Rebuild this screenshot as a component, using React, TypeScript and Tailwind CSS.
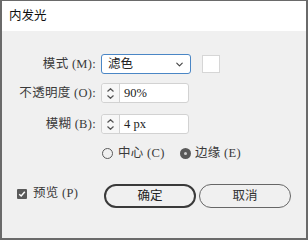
import { ChevronDown } from "lucide-react";

const font = "font-['Liberation_Serif','Noto_Sans_CJK_SC',serif]";

function Spinner({ value }: { value: string }) {
  return (
    <div className="flex h-[20px] w-[88px] rounded-[3px] border border-[#d2d2d2] bg-white">
      <div className="flex w-[18px] flex-col items-center justify-center gap-[3px] border-r border-[#d2d2d2] bg-[#f7f7f7] rounded-l-[3px]">
        <svg width="7" height="4" viewBox="0 0 7 4" fill="none" stroke="#555" strokeWidth="1.2">
          <path d="M0.5 3.5 L3.5 0.7 L6.5 3.5" />
        </svg>
        <svg width="7" height="4" viewBox="0 0 7 4" fill="none" stroke="#555" strokeWidth="1.2">
          <path d="M0.5 0.5 L3.5 3.3 L6.5 0.5" />
        </svg>
      </div>
      <div className="flex items-center pl-[4px] text-[12.5px] text-[#222] whitespace-pre">{value}</div>
    </div>
  );
}

function Label({ children }: { children: React.ReactNode }) {
  return (
    <div className="w-[99px] pr-[5px] text-right text-[12.5px] tracking-[0.3px] text-[#3a3a3a] whitespace-pre">{children}</div>
  );
}

export default function App() {
  return (
    <div className={`${font} flex h-[240px] w-[308px] flex-col border-x-2 border-b-2 border-t border-[#6a6a6a] bg-[#f0f0f0]`}>
      <div className="flex h-[30px] items-center bg-white px-[7px] text-[12.5px] text-[#111]">内发光</div>

      <div className="flex flex-col pt-[23px]">
        <div className="flex h-[20px] items-center">
          <Label>模式 (M):</Label>
          <div className="flex h-[20px] w-[90px] items-center justify-between rounded-[3px] border border-[#4a86c5] bg-white pl-[6px] pr-[5px] text-[12.5px] text-[#222]">
            <span>滤色</span>
            <ChevronDown size={11} strokeWidth={2.5} color="#444" />
          </div>
          <div className="ml-[11px] h-[18px] w-[18px] border border-[#d6d6d6] bg-white" />
        </div>

        <div className="mt-[9px] flex h-[20px] items-center">
          <Label>不透明度 (O):</Label>
          <Spinner value="90%" />
        </div>

        <div className="mt-[11px] flex h-[20px] items-center">
          <Label>模糊 (B):</Label>
          <Spinner value="4 px" />
        </div>

        <div className="mt-[12px] flex h-[14px] items-center pl-[100px] text-[12.5px] tracking-[0.3px] text-[#3a3a3a]">
          <div className="flex w-[78px] items-center">
            <div className="h-[11px] w-[11px] rounded-full border-[1.5px] border-[#5a5a5a]" />
            <span className="ml-[5px] whitespace-pre">中心 (C)</span>
          </div>
          <div className="flex h-[11px] w-[11px] items-center justify-center rounded-full bg-[#5a5a5a]">
            <div className="h-[3px] w-[3px] rounded-full bg-[#cfcfcf]" />
          </div>
          <span className="ml-[4px] whitespace-pre">边缘 (E)</span>
        </div>

        <div className="mt-[24px] flex items-center">
          <div className="flex w-[102px] items-center -mt-[5px]">
            <div className="ml-[15px] flex h-[10px] w-[10px] items-center justify-center rounded-[1px] bg-[#5a5a5a]">
              <svg width="8" height="8" viewBox="0 0 8 8" fill="none" stroke="white" strokeWidth="1.5">
                <path d="M1.2 4.2 L3.2 6 L6.8 1.8" />
              </svg>
            </div>
            <span className="ml-[6px] text-[12.5px] tracking-[0.3px] text-[#3a3a3a] whitespace-pre">预览 (P)</span>
          </div>
          <button className="flex h-[24px] w-[92px] items-center justify-center rounded-full border-2 border-[#3a3a3a] text-[12.5px] text-[#222]">
            确定
          </button>
          <button className="ml-[3px] flex h-[24px] w-[92px] items-center justify-center rounded-full border border-[#666] text-[12.5px] text-[#333]">
            取消
          </button>
        </div>
      </div>
    </div>
  );
}
